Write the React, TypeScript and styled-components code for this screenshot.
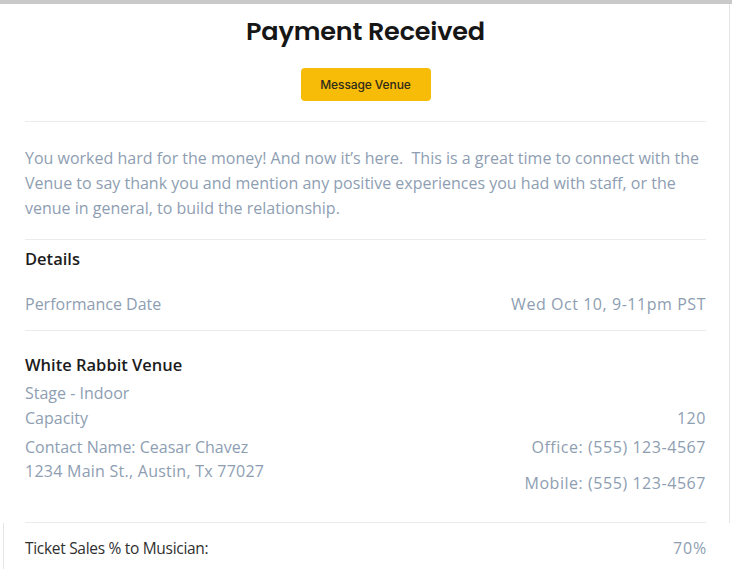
import React from "react";
import styled, { createGlobalStyle } from "styled-components";

const Global = createGlobalStyle`
  html, body { margin: 0; padding: 0; background: #ffffff; }
  body { font-family: "Open Sans", "Lato", sans-serif; }
`;

const Page = styled.div`
  width: 732px;
  height: 569px;
  overflow: hidden;
  background: #fff;
  display: flex;
  flex-direction: column;
`;

const TopBar = styled.div`
  height: 4px;
  background: #c9c9c9;
  flex: none;
`;

const Card = styled.section`
  margin-right: 2px;
  border-right: 1px solid #e4e4e4;
  padding: 11px 23px 0 25px;
  display: flex;
  flex-direction: column;
`;

const Title = styled.h1`
  margin: 0;
  text-align: center;
  font-family: "Poppins", "Inter", sans-serif;
  font-weight: 600;
  font-size: 25.5px;
  line-height: 32px;
  color: #161616;
  letter-spacing: -0.2px;
`;

const ButtonRow = styled.div`
  display: flex;
  justify-content: center;
  margin-top: 21px;
`;

const YellowButton = styled.button`
  width: 130px;
  height: 33px;
  border: none;
  border-radius: 4px;
  background: #f6bc07;
  color: #2e2a1c;
  font-family: "Inter", sans-serif;
  font-weight: 500;
  font-size: 12px;
  letter-spacing: -0.1px;
  cursor: pointer;
`;

const Divider = styled.hr<{ $top: number; $bottom: number }>`
  border: none;
  height: 1px;
  background: #ececec;
  margin: ${(p) => p.$top}px 0 ${(p) => p.$bottom}px 0;
`;

const Paragraph = styled.p`
  margin: 0;
  font-size: 16px;
  line-height: 25px;
  color: #8e9eb2;
  white-space: nowrap;
`;

const SectionTitle = styled.h2<{ $top?: number }>`
  margin: ${(p) => p.$top ?? 0}px 0 0 0;
  font-size: 16.5px;
  font-weight: 600;
  line-height: 22px;
  color: #1c1c1c;
`;

const Row = styled.div<{ $top: number; $align?: string }>`
  display: flex;
  justify-content: space-between;
  align-items: ${(p) => p.$align ?? "center"};
  margin-top: ${(p) => p.$top}px;
  font-size: 16px;
  line-height: 22px;
  color: #8e9eb2;
`;

const Label = styled.span<{ $spacing?: number }>`
  letter-spacing: ${(p) => p.$spacing ?? 0}px;
`;

const Value = styled.span<{ $offset?: number }>`
  text-align: right;
  letter-spacing: 0.55px;
  margin-top: ${(p) => p.$offset ?? 0}px;
`;

const Footer = styled.div`
  flex: 1;
  margin-left: 3px;
  border-left: 1px solid #e4e4e4;
  padding: 14px 25px 0 21px;
  display: flex;
  justify-content: space-between;
  font-size: 15.5px;
  line-height: 22px;
`;

const FooterLabel = styled.span`
  color: #2f2f2f;
  letter-spacing: -0.3px;
`;

const FooterValue = styled.span`
  color: #8e9eb2;
  font-size: 16px;
  letter-spacing: 0.8px;
`;

export default function App() {
  return (
    <Page>
      <Global />
      <TopBar />
      <Card>
        <Title>Payment Received</Title>
        <ButtonRow>
          <YellowButton>Message Venue</YellowButton>
        </ButtonRow>
        <Divider $top={20} $bottom={24} />
        <Paragraph>
          You worked hard for the money! And now it’s here.&nbsp; This is a great time to connect with the
          <br />
          Venue to say thank you and mention any positive experiences you had with staff, or the
          <br />
          venue in general, to build the relationship.
        </Paragraph>
        <Divider $top={18} $bottom={0} />
        <SectionTitle $top={8}>Details</SectionTitle>
        <Row $top={23}>
          <Label>Performance Date</Label>
          <Value>Wed Oct 10, 9-11pm PST</Value>
        </Row>
        <Divider $top={15} $bottom={0} />
        <SectionTitle $top={23}>White Rabbit Venue</SectionTitle>
        <Row $top={6}>
          <Label>Stage - Indoor</Label>
        </Row>
        <Row $top={3}>
          <Label>Capacity</Label>
          <Value>120</Value>
        </Row>
        <Row $top={7}>
          <Label>Contact Name: Ceasar Chavez</Label>
          <Value>Office: (555) 123-4567</Value>
        </Row>
        <Row $top={2} $align="flex-start">
          <Label $spacing={0.25}>1234 Main St., Austin, Tx 77027</Label>
          <Value $offset={12}>Mobile: (555) 123-4567</Value>
        </Row>
        <Divider $top={28} $bottom={0} />
      </Card>
      <Footer>
        <FooterLabel>Ticket Sales % to Musician:</FooterLabel>
        <FooterValue>70%</FooterValue>
      </Footer>
    </Page>
  );
}
